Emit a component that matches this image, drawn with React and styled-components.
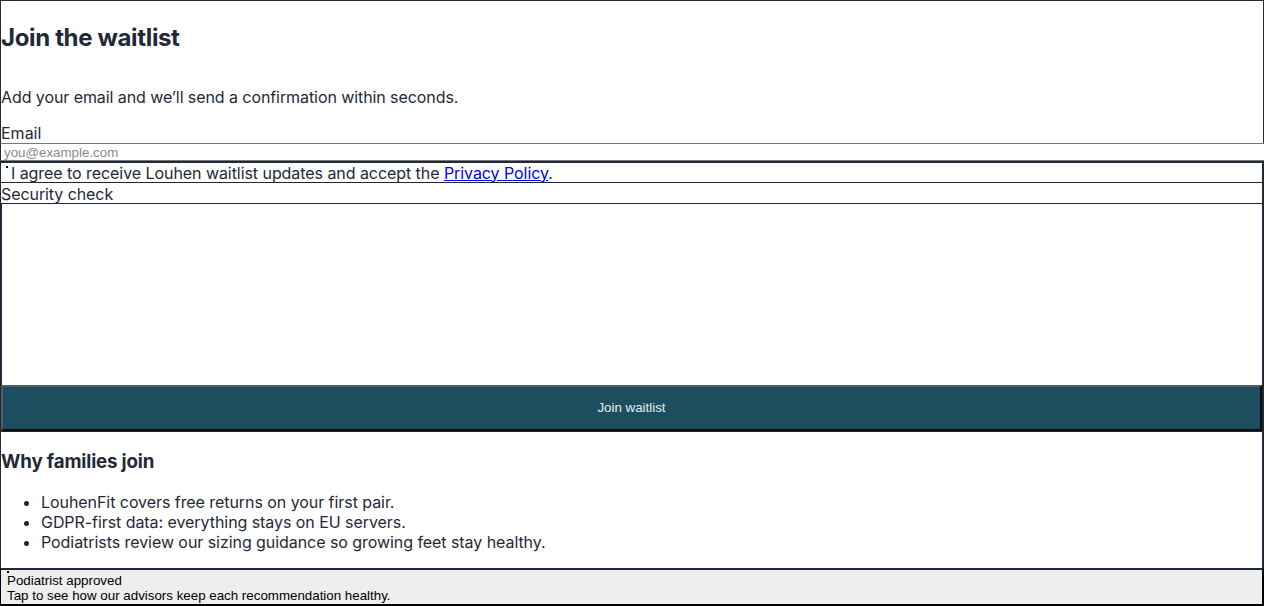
import React from "react";
import styled, { createGlobalStyle } from "styled-components";

const Global = createGlobalStyle`
  html, body { margin: 0; padding: 0; background: #ffffff; }
  body { font-family: Inter, "Noto Sans", sans-serif; color: #1f2937; }
  * { box-sizing: border-box; }
`;

const Page = styled.main`
  width: 1264px;
  display: flex;
  flex-direction: column;
`;

const IntroCard = styled.header`
  border: 1px solid #1f2937;
  height: 144px;
  padding: 0;
`;

const Title = styled.h2`
  margin: 22px 0 0;
  font-size: 24px;
  font-weight: 700;
  line-height: 29px;
  letter-spacing: -0.35px;
`;

const Lead = styled.p`
  margin: 36px 0 17px;
  font-size: 16px;
  line-height: 19px;
  letter-spacing: -0.08px;
`;

const FieldLabel = styled.label`
  display: block;
  font-size: 16px;
  line-height: 19px;
  color: #1f2937;
`;

const EmailInput = styled.input`
  display: block;
  width: 100%;
  height: 18px;
  margin: -1px 0 0;
  padding: 0 3px;
  border: 1px solid #767676;
  border-left: 1px solid #1f2937;
  border-right: none;
  font-family: "Liberation Sans", Arial, sans-serif;
  font-size: 13.33px;
  color: #1f2937;
  outline: none;
  &::placeholder { color: #8a8a8a; }
`;

const Frame = styled.div`
  border-left: 1px solid #1f2937;
  border-right: 2px solid #1f2937;
  display: flex;
  flex-direction: column;
`;

const ConsentRow = styled.label`
  display: flex;
  align-items: center;
  height: 22px;
  border-top: 2px solid #1f2937;
  border-bottom: 1px solid #1f2937;
  padding: 1px 0 0 5px;
  font-size: 16px;
  line-height: 19px;
  letter-spacing: -0.06px;
  color: #1f2937;
`;

const TinyCheck = styled.input`
  appearance: none;
  width: 2px;
  height: 2px;
  margin: 0 3px 13px 0;
  padding: 0;
  border: none;
  background: #000;
  flex: none;
`;

const Link = styled.a`
  color: #0000ee;
  text-decoration: underline;
`;

const SecurityLabel = styled.div`
  height: 21px;
  padding-top: 2px;
  font-size: 16px;
  line-height: 19px;
  letter-spacing: -0.08px;
  color: #1f2937;
  border-bottom: 1px solid #1f2937;
`;

const CaptchaArea = styled.div`
  height: 181px;
  border-left: 1px solid #1f2937;
`;

const SubmitButton = styled.button`
  height: 46px;
  width: 100%;
  margin: 0;
  background: #1d4e5f;
  color: #e6eef0;
  border-style: solid;
  border-width: 2px;
  border-color: #555a60 #0c0c0c #0c0c0c #555a60;
  box-shadow: 0 1px 0 #1f2937;
  font-family: "Liberation Sans", Arial, sans-serif;
  font-size: 13.33px;
  padding: 0 0 2px;
`;

const Benefits = styled.section`
  padding: 0;
  height: 137px;
  border-top: 1px solid #1f2937;
  display: flow-root;
`;

const BenefitsTitle = styled.h3`
  margin: 18px 0 19px;
  font-size: 18.7px;
  font-weight: 700;
  line-height: 23px;
  letter-spacing: -0.15px;
`;

const BenefitList = styled.ul`
  margin: 0;
  padding-left: 40px;
  font-size: 16px;
  line-height: 20px;
  letter-spacing: -0.06px;
`;

const Footer = styled.footer`
  background: #eeeeee;
  border: 2px solid #000;
  border-top-color: #1f2937;
  border-left-width: 1px;
  height: 38px;
  padding: 3px 6px 0;
  font-family: "Liberation Sans", Arial, sans-serif;
  font-size: 13.33px;
  line-height: 15px;
  color: #000;
  position: relative;
`;

const Dot = styled.span`
  position: absolute;
  left: 6px;
  top: 1px;
  width: 2px;
  height: 2px;
  background: #000;
`;

const FooterLine = styled.div``;

export default function App() {
  return (
    <Page>
      <Global />
      <IntroCard>
        <Title>Join the waitlist</Title>
        <Lead>Add your email and we’ll send a confirmation within seconds.</Lead>
        <FieldLabel htmlFor="email">Email</FieldLabel>
      </IntroCard>
      <EmailInput id="email" type="email" placeholder="you@example.com" />
      <Frame>
        <ConsentRow>
          <TinyCheck type="checkbox" />
          <span>
            I agree to receive Louhen waitlist updates and accept the{" "}
            <Link href="#privacy">Privacy Policy</Link>.
          </span>
        </ConsentRow>
        <SecurityLabel>Security check</SecurityLabel>
        <CaptchaArea />
        <SubmitButton type="button">Join waitlist</SubmitButton>
        <Benefits>
          <BenefitsTitle>Why families join</BenefitsTitle>
          <BenefitList>
            <li>LouhenFit covers free returns on your first pair.</li>
            <li>GDPR-first data: everything stays on EU servers.</li>
            <li>Podiatrists review our sizing guidance so growing feet stay healthy.</li>
          </BenefitList>
        </Benefits>
      </Frame>
      <Footer>
        <Dot />
        <FooterLine>Podiatrist approved</FooterLine>
        <FooterLine>Tap to see how our advisors keep each recommendation healthy.</FooterLine>
      </Footer>
    </Page>
  );
}
